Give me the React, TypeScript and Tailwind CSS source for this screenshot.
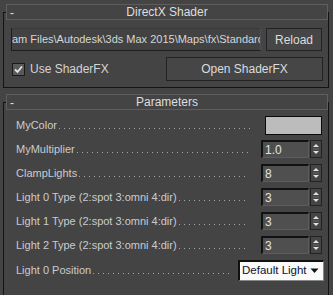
import React from "react";

const FONT = { fontFamily: '"Liberation Sans", Arial, sans-serif' };

function TitleBar({ title }: { title: string }) {
  return (
    <div className="relative -mt-[9px] ml-[2px] h-[16px] border border-[#5e5e5e] bg-[#444444] flex items-center justify-center text-[12px] text-[#dedede] leading-none">
      <span className="absolute left-[3px] top-[2px] text-[#e0e0e0]">-</span>
      <span>{title}</span>
    </div>
  );
}

function Label({ text }: { text: string }) {
  return (
    <div className="flex-1 min-w-0 flex items-center whitespace-nowrap text-[11px] text-[#c9cbcf] leading-none">
      <span>{text}</span>
      <div className="flex-1 h-[1px] mt-[7px] ml-[2px] bg-[linear-gradient(to_right,#a8a8a8_1px,transparent_1px)] bg-[length:5px_1px]" />
    </div>
  );
}

function Spinner({ value }: { value: string }) {
  return (
    <div className="flex items-center gap-[1px] h-[18px]">
      <div className="w-[48px] h-[18px] bg-[#4f4f4f] border-t-2 border-l-2 border-t-[#111111] border-l-[#111111] border-r border-b border-r-[#5c5c5c] border-b-[#5c5c5c] flex items-center pl-[2px] text-[12px] text-[#e2e2e2] leading-none">
        {value}
      </div>
      <div className="w-[12px] h-[18px] bg-[#454545] border border-[#222222] flex flex-col items-center justify-center">
        <svg width="10" height="14" viewBox="0 0 10 14">
          <path d="M2 5 L5 2 L8 5 Z" fill="#e0e0e0" />
          <path d="M2 9 L5 12 L8 9 Z" fill="#e0e0e0" />
          <path d="M2 7 H8" stroke="#6a6a6a" strokeWidth="1" />
        </svg>
      </div>
    </div>
  );
}

function Row({ children }: { children: React.ReactNode }) {
  return <div className="h-[24px] flex items-center pl-[12px] pr-[6px] gap-[12px]">{children}</div>;
}

export default function App() {
  return (
    <div className="w-[333px] h-[295px] bg-[#444444] overflow-hidden pt-[12px]" style={FONT}>
      {/* DirectX Shader rollout */}
      <div className="ml-[3px] w-[326px] border border-[#141414]">
        <TitleBar title="DirectX Shader" />
        <div className="mt-[8px] pl-[7px] pr-[5px] flex items-center h-[23px]">
          <div className="w-[250px] h-[23px] bg-[#424242] border-l border-b border-[#1e1e1e] border-t border-t-[#3a3a3a] border-r border-r-[#505050] overflow-hidden whitespace-nowrap flex items-center text-[11px] text-[#d6d6d6] leading-none">
            <span className="whitespace-nowrap">am Files\Autodesk\3ds Max 2015\Maps\fx\Standard</span>
          </div>
          <div className="ml-[5px] w-[56px] h-[23px] border border-[#222222] bg-[#464646] flex items-center justify-center text-[12px] text-[#dcdcdc] leading-none">
            Reload
          </div>
        </div>
        <div className="mt-[6px] mb-[6px] flex items-center h-[24px] pl-[8px] pr-[5px]">
          <div className="w-[13px] h-[13px] border border-[#1a1a1a] bg-[#5a5a5a] flex items-center justify-center">
            <svg width="11" height="11" viewBox="0 0 11 11">
              <path d="M2 5.5 L4.5 8 L9 2.5" stroke="#e8e8e8" strokeWidth="1.8" fill="none" />
            </svg>
          </div>
          <span className="ml-[5px] text-[12px] text-[#d4d4d4] leading-none">Use ShaderFX</span>
          <div className="ml-auto w-[157px] h-[24px] border border-[#222222] bg-[#464646] flex items-center justify-center text-[12px] text-[#dcdcdc] leading-none">
            Open ShaderFX
          </div>
        </div>
      </div>

      {/* Parameters rollout */}
      <div className="mt-[14px] ml-[3px] w-[326px] h-[220px] border border-[#141414]">
        <TitleBar title="Parameters" />
        <div className="mt-[3px]">
          <Row>
            <Label text="MyColor" />
            <div className="w-[57px] h-[19px] bg-[#bcbcbc] border border-[#0a0a0a]" />
          </Row>
          <Row>
            <Label text="MyMultiplier" />
            <Spinner value="1.0" />
          </Row>
          <Row>
            <Label text="ClampLights" />
            <Spinner value="8" />
          </Row>
          <Row>
            <Label text="Light 0 Type (2:spot 3:omni 4:dir)" />
            <Spinner value="3" />
          </Row>
          <Row>
            <Label text="Light 1 Type (2:spot 3:omni 4:dir)" />
            <Spinner value="3" />
          </Row>
          <Row>
            <Label text="Light 2 Type (2:spot 3:omni 4:dir)" />
            <Spinner value="3" />
          </Row>
          <div className="h-[26px] flex items-center pl-[12px] pr-[4px] gap-[8px]">
            <Label text="Light 0 Position" />
            <div className="w-[86px] h-[21px] bg-[#fafafa] border-t-2 border-l-2 border-[#111111] border-r border-b border-r-[#888888] border-b-[#888888] flex items-center pl-[2px] pr-[4px] text-[12px] text-[#101030] leading-none">
              <span className="flex-1 whitespace-nowrap text-[11.5px]">Default Light</span>
              <svg width="9" height="6" viewBox="0 0 9 6" className="shrink-0">
                <path d="M0.5 0.5 L8.5 0.5 L4.5 5 Z" fill="#111111" />
              </svg>
            </div>
          </div>
        </div>
      </div>
    </div>
  );
}
